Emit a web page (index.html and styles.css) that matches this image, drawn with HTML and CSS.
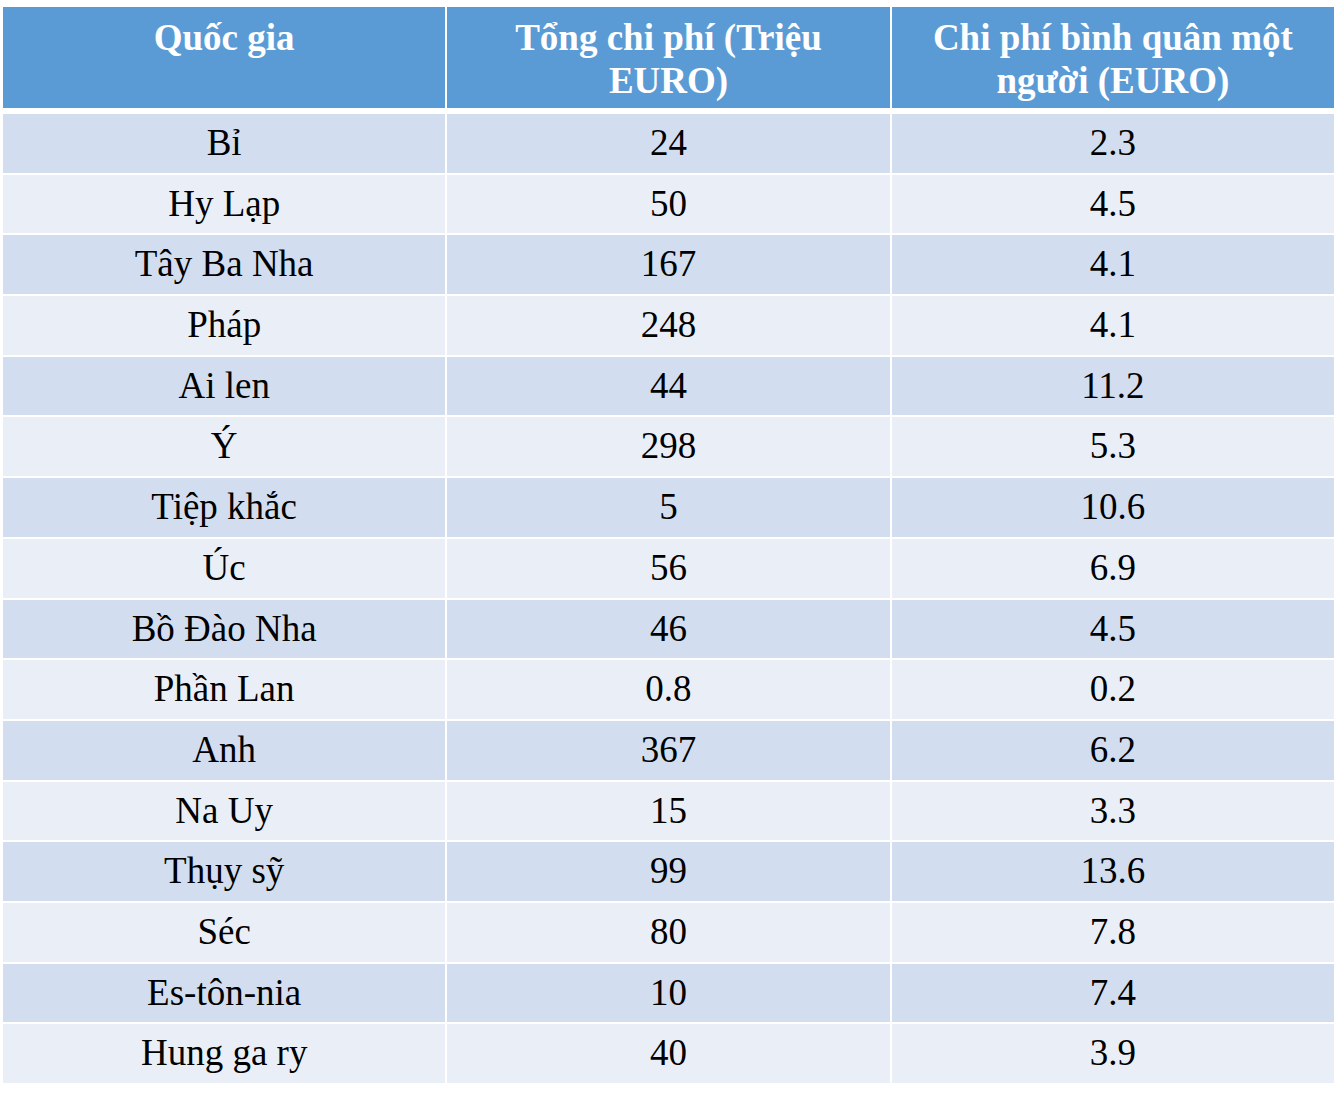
FILE: index.html
```html
<!DOCTYPE html>
<html lang="vi">
<head>
<meta charset="utf-8">
<title>Chi phí</title>
<link rel="stylesheet" href="styles.css">
</head>
<body>
<div class="table">
  <div class="head">
    <div class="hcell">Quốc gia</div>
    <div class="hcell">Tổng chi phí (Triệu EURO)</div>
    <div class="hcell">Chi phí bình quân một người (EURO)</div>
  </div>
  <div class="body">
    <div class="row odd"><div class="cell">Bỉ</div><div class="cell">24</div><div class="cell">2.3</div></div>
    <div class="row even"><div class="cell">Hy Lạp</div><div class="cell">50</div><div class="cell">4.5</div></div>
    <div class="row odd"><div class="cell">Tây Ba Nha</div><div class="cell">167</div><div class="cell">4.1</div></div>
    <div class="row even"><div class="cell">Pháp</div><div class="cell">248</div><div class="cell">4.1</div></div>
    <div class="row odd"><div class="cell">Ai len</div><div class="cell">44</div><div class="cell">11.2</div></div>
    <div class="row even"><div class="cell">Ý</div><div class="cell">298</div><div class="cell">5.3</div></div>
    <div class="row odd"><div class="cell">Tiệp khắc</div><div class="cell">5</div><div class="cell">10.6</div></div>
    <div class="row even"><div class="cell">Úc</div><div class="cell">56</div><div class="cell">6.9</div></div>
    <div class="row odd"><div class="cell">Bồ Đào Nha</div><div class="cell">46</div><div class="cell">4.5</div></div>
    <div class="row even"><div class="cell">Phần Lan</div><div class="cell">0.8</div><div class="cell">0.2</div></div>
    <div class="row odd"><div class="cell">Anh</div><div class="cell">367</div><div class="cell">6.2</div></div>
    <div class="row even"><div class="cell">Na Uy</div><div class="cell">15</div><div class="cell">3.3</div></div>
    <div class="row odd"><div class="cell">Thụy sỹ</div><div class="cell">99</div><div class="cell">13.6</div></div>
    <div class="row even"><div class="cell">Séc</div><div class="cell">80</div><div class="cell">7.8</div></div>
    <div class="row odd"><div class="cell">Es-tôn-nia</div><div class="cell">10</div><div class="cell">7.4</div></div>
    <div class="row even"><div class="cell">Hung ga ry</div><div class="cell">40</div><div class="cell">3.9</div></div>
  </div>
</div>
</body>
</html>
```

FILE: styles.css
```css
html, body {
  margin: 0;
  padding: 0;
  background: #ffffff;
}

body {
  font-family: "Liberation Serif", "Times New Roman", serif;
  font-size: 37px;
  line-height: 43px;
  color: #000000;
}

.table {
  width: 1331px;
  margin: 7px 0 0 3px;
}

.head,
.row {
  display: grid;
  grid-template-columns: repeat(3, 1fr);
  column-gap: 2px;
}

.head {
  height: 101px;
  margin-bottom: 6px;
}

.hcell {
  background: #5b9bd5;
  color: #ffffff;
  font-weight: bold;
  text-align: center;
  padding: 9px 12px 0;
}

.body {
  height: 969px;
  display: grid;
  grid-template-rows: repeat(16, 1fr);
  row-gap: 2px;
}

.cell {
  text-align: center;
  padding: 7px 12px 0;
}

.odd .cell {
  background: #d2deef;
}

.even .cell {
  background: #eaeff7;
}
```
